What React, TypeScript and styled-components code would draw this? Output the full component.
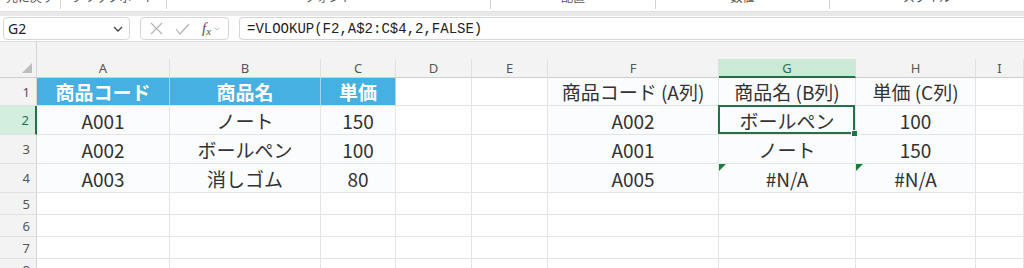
import { Fragment } from 'react';
import styled, { createGlobalStyle, css } from 'styled-components';

const GlobalStyle = createGlobalStyle`
  html, body {
    margin: 0;
    padding: 0;
    background: #f3f3f3;
    overflow: hidden;
  }
  body {
    width: 1024px;
    height: 268px;
    font-family: "Noto Sans", "Noto Sans CJK JP", sans-serif;
  }
`;

const GREEN = '#217346';

const Ribbon = styled.div`
  display: flex;
  height: 11px;
  background: #fff;
  overflow: hidden;
`;

const RibbonGroup = styled.div<{ $w: number; $last?: boolean }>`
  flex: ${p => (p.$last ? '1' : `0 0 ${p.$w}px`)};
  display: flex;
  justify-content: center;
  align-items: flex-start;
  height: 9px;
  border-right: ${p => (p.$last ? 'none' : '1px solid #d4d4d4')};
  box-sizing: border-box;
`;

const RibbonLabel = styled.span`
  font-family: "Noto Sans CJK JP", sans-serif;
  font-size: 12px;
  line-height: 14px;
  color: #555;
  margin-top: -10px;
  white-space: nowrap;
`;

const Band = styled.div`
  height: 5px;
  background: #e9e9e9;
  border-top: 1px solid #e2e2e2;
  box-sizing: border-box;
`;

const FormulaBar = styled.div`
  display: flex;
  align-items: center;
  gap: 10px;
  height: 26px;
  padding: 0 0 0 3px;
  background: #fff;
  border-bottom: 1px solid #dedede;
  box-sizing: border-box;
`;

const Box = styled.div<{ $w?: number; $grow?: boolean }>`
  display: flex;
  align-items: center;
  height: 23px;
  box-sizing: border-box;
  border: 1px solid #d6d6d6;
  border-radius: 4px;
  background: #fff;
  ${p => (p.$grow ? css`flex: 1; border-right: none; border-radius: 4px 0 0 4px;` : css`flex: 0 0 ${p.$w}px;`)}
`;

const NameText = styled.span`
  flex: 1;
  padding-left: 4px;
  font-size: 14px;
  color: #222;
`;

const IconSlot = styled.span<{ $ml?: number; $mr?: number }>`
  display: inline-flex;
  align-items: center;
  margin-left: ${p => p.$ml ?? 0}px;
  margin-right: ${p => p.$mr ?? 0}px;
`;

const Fx = styled.span`
  font-family: "Liberation Serif", serif;
  font-style: italic;
  font-size: 15px;
  color: #555;
  margin-left: 12px;
  line-height: 1;
  sub {
    font-size: 11px;
    vertical-align: -2px;
  }
`;

const FormulaText = styled.span`
  padding-left: 7px;
  font-family: "Liberation Mono", monospace;
  font-size: 14px;
  color: #222;
  white-space: nowrap;
`;

const Sheet = styled.div`
  display: grid;
  grid-template-columns: 37px 133px 151px 75px 76px 76px 171px 137px 120px 1fr;
  grid-template-rows: 17px 19px 28px 29px 29px 29px 22px 22px 22px 22px;
  background: #fff;
`;

const Gap = styled.div<{ $corner?: boolean }>`
  background: #f3f3f3;
  ${p => (p.$corner ? css`border-right: 1px solid #d6d6d6;` : css`grid-column: 2 / -1;`)}
`;

const Corner = styled.div`
  background: #f3f3f3;
  border-right: 1px solid #d6d6d6;
  border-bottom: 1px solid #cfcfcf;
  position: relative;
  &::after {
    content: '';
    position: absolute;
    right: 4px;
    bottom: 4px;
    border-style: solid;
    border-width: 0 0 10px 10px;
    border-color: transparent transparent #bdbdbd transparent;
  }
`;

const ColHead = styled.div<{ $active?: boolean }>`
  display: flex;
  align-items: center;
  justify-content: center;
  font-family: "Noto Sans", sans-serif;
  font-size: 13px;
  color: ${p => (p.$active ? GREEN : '#555')};
  background: ${p => (p.$active ? '#caead7' : '#f3f3f3')};
  border-right: 1px solid #e0e0e0;
  border-bottom: ${p => (p.$active ? `2px solid ${GREEN}` : '1px solid #cfcfcf')};
  box-sizing: border-box;
`;

const RowHead = styled.div<{ $active?: boolean }>`
  display: flex;
  align-items: center;
  justify-content: flex-end;
  padding-right: 6px;
  font-family: "Noto Sans", sans-serif;
  font-size: 13px;
  color: ${p => (p.$active ? GREEN : '#555')};
  background: ${p => (p.$active ? '#d3eedf' : '#f3f3f3')};
  border-right: ${p => (p.$active ? `2px solid ${GREEN}` : '1px solid #d6d6d6')};
  border-bottom: 1px solid #e2e2e2;
  box-sizing: border-box;
`;

const Cell = styled.div<{ $head?: boolean; $tint?: boolean; $selected?: boolean; $error?: boolean }>`
  position: relative;
  display: flex;
  align-items: center;
  justify-content: center;
  font-family: "Noto Sans CJK JP", sans-serif;
  font-size: 19px;
  line-height: 1;
  white-space: nowrap;
  color: #333;
  background: ${p => (p.$head ? '#47b0e2' : p.$tint ? '#fbfcfd' : '#fff')};
  border-right: 1px solid ${p => (p.$head ? '#a6d6ef' : '#e4e4e4')};
  border-bottom: 1px solid #e4e4e4;
  box-sizing: border-box;
  ${p =>
    p.$head &&
    css`
      color: #fff;
      font-weight: 700;
    `}
  ${p =>
    p.$selected &&
    css`
      &::after {
        content: '';
        position: absolute;
        inset: -1px 0 0 -1px;
        border: 2px solid ${GREEN};
      }
      &::before {
        content: '';
        position: absolute;
        right: -3px;
        bottom: -3px;
        width: 5px;
        height: 5px;
        background: ${GREEN};
        border: 1px solid #fff;
        z-index: 2;
      }
    `}
  ${p =>
    p.$error &&
    css`
      &::before {
        content: '';
        position: absolute;
        left: 0;
        top: 0;
        border-style: solid;
        border-width: 7px 7px 0 0;
        border-color: #1e7a3c transparent transparent transparent;
      }
    `}
`;

const groups = [
  { label: '元に戻す', w: 61 },
  { label: 'クリップボード', w: 106 },
  { label: 'フォント', w: 324 },
  { label: '配置', w: 165 },
  { label: '数値', w: 174 },
  { label: 'スタイル', w: 0 },
];

const letters = ['A', 'B', 'C', 'D', 'E', 'F', 'G', 'H', 'I'];

const rows: string[][] = [
  ['商品コード', '商品名', '単価', '', '', '商品コード (A列)', '商品名 (B列)', '単価 (C列)', ''],
  ['A001', 'ノート', '150', '', '', 'A002', 'ボールペン', '100', ''],
  ['A002', 'ボールペン', '100', '', '', 'A001', 'ノート', '150', ''],
  ['A003', '消しゴム', '80', '', '', 'A005', '#N/A', '#N/A', ''],
  ['', '', '', '', '', '', '', '', ''],
  ['', '', '', '', '', '', '', '', ''],
  ['', '', '', '', '', '', '', '', ''],
  ['', '', '', '', '', '', '', '', ''],
];

const Chevron = ({ w = 10, color = '#444' }: { w?: number; color?: string }) => (
  <svg width={w} height={w * 0.6} viewBox="0 0 10 6">
    <polyline points="1,1 5,5 9,1" fill="none" stroke={color} strokeWidth="1.3" />
  </svg>
);

function App() {
  return (
    <>
      <GlobalStyle />
      <Ribbon>
        {groups.map((g, i) => (
          <RibbonGroup key={g.label} $w={g.w} $last={i === groups.length - 1}>
            <RibbonLabel>{g.label}</RibbonLabel>
          </RibbonGroup>
        ))}
      </Ribbon>
      <Band />
      <FormulaBar>
        <Box $w={127}>
          <NameText>G2</NameText>
          <IconSlot $mr={6}>
            <Chevron />
          </IconSlot>
        </Box>
        <Box $w={89}>
          <IconSlot $ml={9}>
            <svg width="13" height="13" viewBox="0 0 13 13">
              <path d="M1 1 L12 12 M12 1 L1 12" stroke="#b5b5b5" strokeWidth="1.2" />
            </svg>
          </IconSlot>
          <IconSlot $ml={12}>
            <svg width="15" height="12" viewBox="0 0 15 12">
              <polyline points="1,6 5,11 14,1" fill="none" stroke="#b5b5b5" strokeWidth="1.2" />
            </svg>
          </IconSlot>
          <Fx>
            f<sub>x</sub>
          </Fx>
          <IconSlot $ml={3}>
            <Chevron w={6} color="#aaa" />
          </IconSlot>
        </Box>
        <Box $grow>
          <FormulaText>=VLOOKUP(F2,A$2:C$4,2,FALSE)</FormulaText>
        </Box>
      </FormulaBar>
      <Sheet>
        <Gap $corner />
        <Gap />
        <Corner />
        {letters.map(l => (
          <ColHead key={l} $active={l === 'G'}>
            {l}
          </ColHead>
        ))}
        {rows.map((r, ri) => (
          <Fragment key={ri}>
            <RowHead $active={ri === 1}>{ri + 1}</RowHead>
            {r.map((v, ci) => (
              <Cell
                key={ci}
                $head={ri === 0 && ci < 3}
                $tint={ri < 4 && (ci < 3 || (ci >= 5 && ci <= 7))}
                $selected={ri === 1 && ci === 6}
                $error={ri === 3 && (ci === 6 || ci === 7)}
              >
                {v}
              </Cell>
            ))}
          </Fragment>
        ))}
      </Sheet>
    </>
  );
}

export default App;
